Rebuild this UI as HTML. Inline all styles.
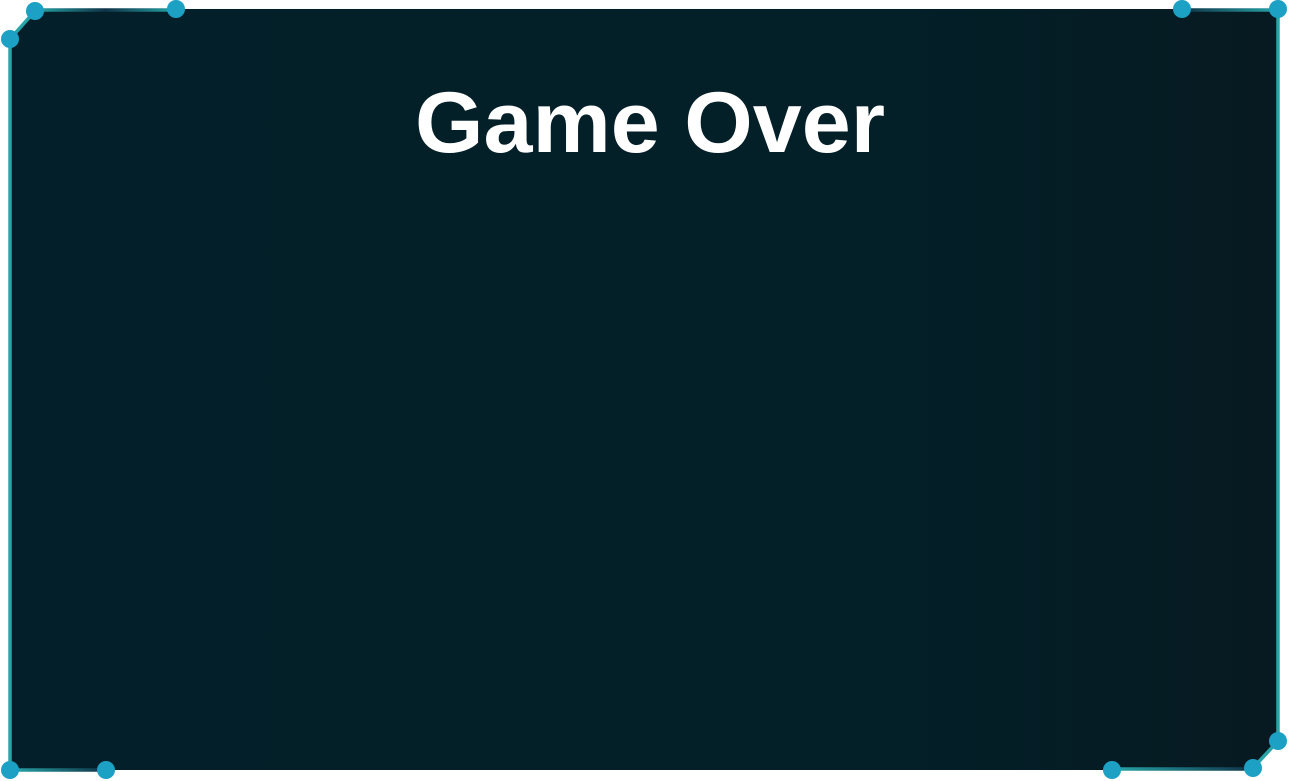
<!DOCTYPE html>
<html><head><meta charset="utf-8"><style>
html,body{margin:0;padding:0;background:#fff;width:1289px;height:781px;overflow:hidden}
svg{display:block}
</style></head><body>
<svg width="1289" height="781" viewBox="0 0 1289 781" xmlns="http://www.w3.org/2000/svg">
<defs>
<linearGradient id="bg" x1="0" y1="0" x2="1" y2="0">
<stop offset="0" stop-color="#03202a"/><stop offset="0.7" stop-color="#031f28"/><stop offset="1" stop-color="#071a21"/>
</linearGradient>
<linearGradient id="t1" x1="35" y1="0" x2="176" y2="0" gradientUnits="userSpaceOnUse">
<stop offset="0" stop-color="#27a5a8"/><stop offset="0.5" stop-color="#0f3448"/><stop offset="1" stop-color="#27a5a8"/>
</linearGradient>
<linearGradient id="t2" x1="1182" y1="0" x2="1278" y2="0" gradientUnits="userSpaceOnUse">
<stop offset="0" stop-color="#0f3448"/><stop offset="1" stop-color="#27a5a8"/>
</linearGradient>
<linearGradient id="b1" x1="10" y1="0" x2="106" y2="0" gradientUnits="userSpaceOnUse">
<stop offset="0" stop-color="#27a5a8"/><stop offset="1" stop-color="#0f3448"/>
</linearGradient>
<linearGradient id="b2" x1="1112" y1="0" x2="1253" y2="0" gradientUnits="userSpaceOnUse">
<stop offset="0" stop-color="#27a5a8"/><stop offset="1" stop-color="#0f3448"/>
</linearGradient>
</defs>
<polygon points="10,39 35,9 1279,9 1279,741 1253,770 10,770" fill="url(#bg)"/>
<polyline points="10,770 10,39 35,11" fill="none" stroke="#27a5a8" stroke-width="3.5"/>
<line x1="35" y1="10" x2="176" y2="10" stroke="url(#t1)" stroke-width="3.5"/>
<line x1="1182" y1="10" x2="1278" y2="10" stroke="url(#t2)" stroke-width="3.5"/>
<polyline points="1278,10 1278,741 1253,768" fill="none" stroke="#27a5a8" stroke-width="3.5"/>
<line x1="10" y1="770" x2="106" y2="770" stroke="url(#b1)" stroke-width="3.5"/>
<line x1="1112" y1="769" x2="1253" y2="769" stroke="url(#b2)" stroke-width="3.5"/>
<g fill="#1ca0c4">
<circle cx="35" cy="11" r="9"/><circle cx="176" cy="9" r="9"/><circle cx="1182" cy="9" r="9"/><circle cx="1278" cy="9" r="9"/>
<circle cx="10" cy="39" r="9"/><circle cx="10" cy="770" r="9"/><circle cx="106" cy="770" r="9"/>
<circle cx="1112" cy="770" r="9"/><circle cx="1253" cy="768" r="9"/><circle cx="1278" cy="741" r="9"/>
</g>
<text x="415" y="152" font-family="Liberation Sans, sans-serif" font-weight="bold" font-size="86" fill="#fff" textLength="470" lengthAdjust="spacingAndGlyphs">Game Over</text>
</svg>
</body></html>
